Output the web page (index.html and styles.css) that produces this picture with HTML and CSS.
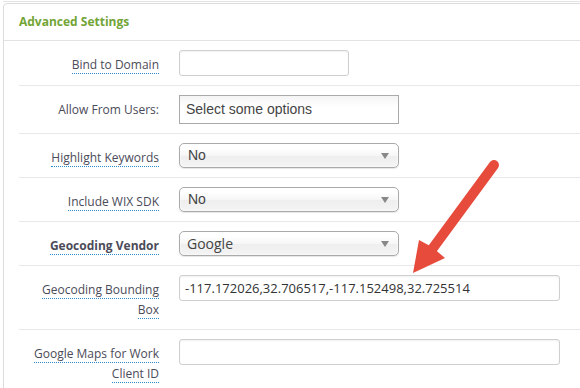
FILE: index.html
```html
<!DOCTYPE html>
<html lang="en">
<head>
    <meta charset="UTF-8">
    <title>Advanced Settings</title>
    <link rel="stylesheet" href="styles.css">
</head>
<body>
    <div class="prev-panel"></div>
    <div class="panel">
        <div class="panel-heading">Advanced Settings</div>
        <div class="panel-body">
            <div class="row">
                <div class="label"><span class="tip">Bind to Domain</span></div>
                <div class="control"><input type="text" class="input input-small"></div>
            </div>
            <div class="row">
                <div class="label">Allow From Users:</div>
                <div class="control"><div class="multi">Select some options</div></div>
            </div>
            <div class="row">
                <div class="label"><span class="tip">Highlight Keywords</span></div>
                <div class="control"><div class="chosen">No<span class="caret"></span></div></div>
            </div>
            <div class="row">
                <div class="label"><span class="tip">Include WIX SDK</span></div>
                <div class="control"><div class="chosen">No<span class="caret"></span></div></div>
            </div>
            <div class="row">
                <div class="label"><span class="tip bold">Geocoding Vendor</span></div>
                <div class="control"><div class="chosen chosen-sans">Google<span class="caret"></span></div></div>
            </div>
            <div class="row">
                <div class="label"><span class="tip">Geocoding Bounding Box</span></div>
                <div class="control"><input type="text" class="input input-wide" value="-117.172026,32.706517,-117.152498,32.725514"></div>
            </div>
            <div class="row">
                <div class="label"><span class="tip">Google Maps for Work Client ID</span></div>
                <div class="control"><input type="text" class="input input-wide"></div>
            </div>
        </div>
    </div>

    <svg class="arrow" width="580" height="388" viewBox="0 0 580 388">
        <line x1="494" y1="165" x2="433" y2="248" stroke="#e74b3c" stroke-width="10" stroke-linecap="round"/>
        <polygon points="413,273 419,240 432,247 445,258" fill="#e74b3c"/>
    </svg>
</body>
</html>
```

FILE: styles.css
```css
html, body {
    margin: 0;
    padding: 0;
    overflow: hidden;
    background: #fff;
}
body {
    font-family: "Open Sans", sans-serif;
    width: 580px;
    height: 388px;
    position: relative;
}
.prev-panel {
    margin-left: 3px;
    height: 1px;
    border-bottom: 1px solid #e3e3e3;
}
.panel {
    margin-top: 1px;
    margin-left: 3px;
    width: 640px;
    border: 1px solid #dcdcdc;
    border-radius: 4px;
}
.panel-heading {
    height: 36px;
    padding-left: 15px;
    font-size: 12px;
    font-weight: bold;
    color: #72a436;
    line-height: 35px;
    border-bottom: 1px solid #e2e2e2;
}
.panel-body {
    padding-left: 15px;
}
.row {
    display: flex;
    padding: 9px 0;
    border-bottom: 1px solid #e8e8e8;
}
.label {
    width: 140px;
    flex: none;
    text-align: right;
    font-size: 12px;
    line-height: 20px;
    padding-top: 5px;
    color: #4b4b59;
}
.tip {
    border-bottom: 1px dotted #2a8ccc;
}
.bold {
    font-weight: bold;
}
.control {
    margin-left: 20px;
}
.input {
    box-sizing: border-box;
    height: 26px;
    border: 1px solid #cfcfcf;
    border-radius: 3px;
    box-shadow: inset 0 1px 2px rgba(0, 0, 0, 0.06);
    font-family: "Open Sans", sans-serif;
    font-size: 13px;
    color: #333;
    padding: 0 5px;
    margin: 0;
}
.input-small {
    width: 170px;
}
.input-wide {
    width: 381px;
}
.multi {
    box-sizing: border-box;
    width: 220px;
    height: 29px;
    border: 1px solid #aaa;
    font-family: "Liberation Sans", Arial, sans-serif;
    font-size: 14px;
    line-height: 27px;
    color: #444;
    padding-left: 6px;
    background: linear-gradient(#f4f4f4, #fff 40%);
}
.chosen {
    position: relative;
    box-sizing: border-box;
    width: 220px;
    height: 25px;
    border: 1px solid #aaa;
    border-radius: 5px;
    background: linear-gradient(#fff 20%, #f6f6f6 50%, #eee 52%, #f4f4f4);
    box-shadow: 0 0 3px #fff inset, 0 1px 1px rgba(0, 0, 0, 0.1);
    font-family: "Liberation Sans", Arial, sans-serif;
    font-size: 14px;
    line-height: 23px;
    color: #444;
    padding-left: 8px;
}
.chosen-sans {
    font-family: "Open Sans", sans-serif;
    padding-left: 7px;
}
.caret {
    position: absolute;
    right: 9px;
    top: 9px;
    width: 0;
    height: 0;
    border-left: 4px solid transparent;
    border-right: 4px solid transparent;
    border-top: 6px solid #888;
}
.arrow {
    position: absolute;
    left: 0;
    top: 0;
    pointer-events: none;
}
```
